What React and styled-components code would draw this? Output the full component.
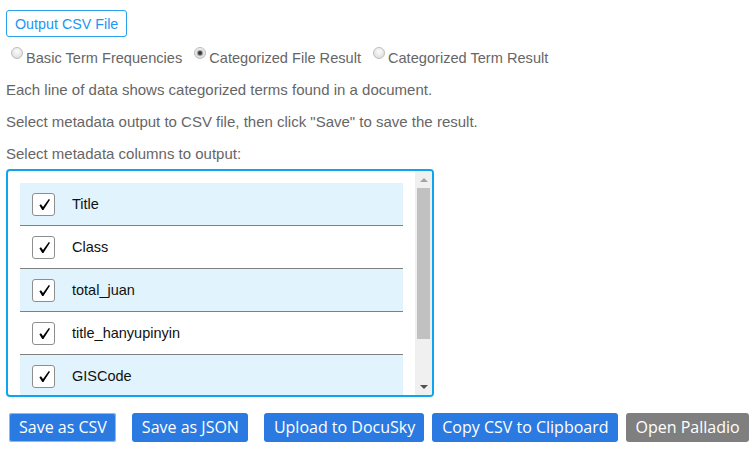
import React, { useState } from 'react';
import styled, { createGlobalStyle, css } from 'styled-components';

const GlobalStyle = createGlobalStyle`
  html, body {
    margin: 0;
    background: #fff;
  }
  body {
    font-family: "Liberation Sans", Arial, sans-serif;
  }
`;

const Page = styled.div`
  display: flex;
  flex-direction: column;
  align-items: flex-start;
  padding: 10px 6px 0;
  color: #666;
`;

const OutlineButton = styled.button`
  height: 27px;
  padding: 0 8px;
  border: 1px solid #2aa1ec;
  border-radius: 3px;
  background: #fff;
  color: #2196f3;
  font-family: inherit;
  font-size: 14.3px;
  cursor: pointer;
`;

const RadioRow = styled.div`
  display: flex;
  gap: 7px;
  margin-top: 10px;
`;

const Option = styled.label`
  display: flex;
  align-items: flex-start;
  font-size: 14.6px;
  color: #666;
  cursor: pointer;
`;

const RadioDot = styled.span`
  width: 12px;
  height: 12px;
  margin: 0 3px 0 5px;
  box-sizing: border-box;
  border-radius: 50%;
  border: 1px solid #bdbdbd;
  background: radial-gradient(circle at 50% 35%, #fcfcfc 0%, #e8e8e8 55%, #d4d4d4 100%);
  display: flex;
  align-items: center;
  justify-content: center;

  ${({ $checked }) =>
    $checked &&
    css`
      &::after {
        content: '';
        width: 4px;
        height: 4px;
        border-radius: 50%;
        background: #3a3a3a;
        box-shadow: 0 0 1px 1px rgba(60, 60, 60, 0.5);
      }
    `}
`;

const OptionText = styled.span`
  line-height: 20px;
  margin-top: 1px;
`;

const Note = styled.p`
  margin: ${({ $top }) => $top}px 0 0;
  font-size: 15px;
  line-height: 20px;
  color: #666;
`;

const ColumnBox = styled.div`
  display: flex;
  box-sizing: border-box;
  width: 428px;
  height: 228px;
  margin-top: 5px;
  border: 2px solid #0ea5ee;
  border-radius: 4px;
  overflow: hidden;
`;

const ColumnList = styled.div`
  flex: 1;
  min-width: 0;
  padding: 12px;
  overflow: hidden;
`;

const ScrollBar = styled.div`
  flex: none;
  width: 17px;
  display: flex;
  flex-direction: column;
  background: #f0f0f0;
`;

const ScrollArrow = styled.div`
  height: 17px;
  display: flex;
  align-items: center;
  justify-content: center;

  &::before {
    content: '';
    border-left: 4px solid transparent;
    border-right: 4px solid transparent;
    ${({ $down }) =>
      $down
        ? css`border-top: 4px solid #505050;`
        : css`border-bottom: 4px solid #a3a3a3;`}
  }
`;

const ScrollTrack = styled.div`
  flex: 1;
`;

const ScrollThumb = styled.div`
  height: 151px;
  margin: 0 2px;
  background: #c1c1c1;
`;

const ColumnRow = styled.label`
  display: flex;
  align-items: center;
  height: 43px;
  box-sizing: border-box;
  padding-left: 12px;
  border-bottom: 1px solid #808080;
  background: ${({ $shaded }) => ($shaded ? '#e1f4fd' : '#fff')};
  cursor: pointer;
`;

const CheckBox = styled.span`
  width: 23px;
  height: 23px;
  box-sizing: border-box;
  border: 1px solid #8e8e8e;
  border-radius: 3px;
  background: #fff;
  display: flex;
  align-items: center;
  justify-content: center;

  svg {
    display: block;
    margin-left: 1px;
  }
`;

const ColumnName = styled.span`
  margin-left: 17px;
  font-size: 14.5px;
  color: #111;
`;

const ActionBar = styled.div`
  display: flex;
  gap: 8px;
  margin-top: 16px;
  padding-left: 3px;
`;

const ActionButton = styled.button`
  height: 29px;
  padding: 0 9px 0 10px;
  border: none;
  border-radius: 3px;
  background: ${({ $muted }) => ($muted ? '#7f7f7f' : '#2a7ae2')};
  color: #fff;
  font-family: "Open Sans", "Noto Sans", sans-serif;
  font-size: 16px;
  line-height: 29px;
  white-space: nowrap;
  cursor: pointer;
  margin-right: ${({ $spaced }) => ($spaced ? '8px' : '0')};

  ${({ $focused }) =>
    $focused &&
    css`
      box-shadow: inset 0 0 0 1px #8db8f0;
    `}
`;

const CheckMark = () => (
  <svg width="11" height="11" viewBox="0 0 11 11">
    <path d="M0.4 6.2 L2 5.2 L4 8.1 L9.8 0 L11 0.8 L4.4 11 L3.2 11 Z" fill="#000" />
  </svg>
);

const COLUMNS = ['Title', 'Class', 'total_juan', 'title_hanyupinyin', 'GISCode', 'Dynasty'];
const MODES = ['Basic Term Frequencies', 'Categorized File Result', 'Categorized Term Result'];

export default function App() {
  const [mode, setMode] = useState(1);
  const [checked, setChecked] = useState(COLUMNS.map(() => true));

  const toggle = (i) => setChecked((prev) => prev.map((v, j) => (j === i ? !v : v)));

  return (
    <>
      <GlobalStyle />
      <Page>
        <OutlineButton>Output CSV File</OutlineButton>

        <RadioRow>
          {MODES.map((m, i) => (
            <Option key={m} onClick={() => setMode(i)}>
              <RadioDot $checked={mode === i} />
              <OptionText>{m}</OptionText>
            </Option>
          ))}
        </RadioRow>

        <Note $top={12}>Each line of data shows categorized terms found in a document.</Note>
        <Note $top={12}>Select metadata output to CSV file, then click "Save" to save the result.</Note>
        <Note $top={12}>Select metadata columns to output:</Note>

        <ColumnBox>
          <ColumnList>
            {COLUMNS.map((c, i) => (
              <ColumnRow key={c} $shaded={i % 2 === 0} onClick={() => toggle(i)}>
                <CheckBox>{checked[i] && <CheckMark />}</CheckBox>
                <ColumnName>{c}</ColumnName>
              </ColumnRow>
            ))}
          </ColumnList>
          <ScrollBar>
            <ScrollArrow />
            <ScrollTrack>
              <ScrollThumb />
            </ScrollTrack>
            <ScrollArrow $down />
          </ScrollBar>
        </ColumnBox>

        <ActionBar>
          <ActionButton $focused $spaced>Save as CSV</ActionButton>
          <ActionButton $spaced>Save as JSON</ActionButton>
          <ActionButton>Upload to DocuSky</ActionButton>
          <ActionButton>Copy CSV to Clipboard</ActionButton>
          <ActionButton $muted>Open Palladio</ActionButton>
        </ActionBar>
      </Page>
    </>
  );
}
